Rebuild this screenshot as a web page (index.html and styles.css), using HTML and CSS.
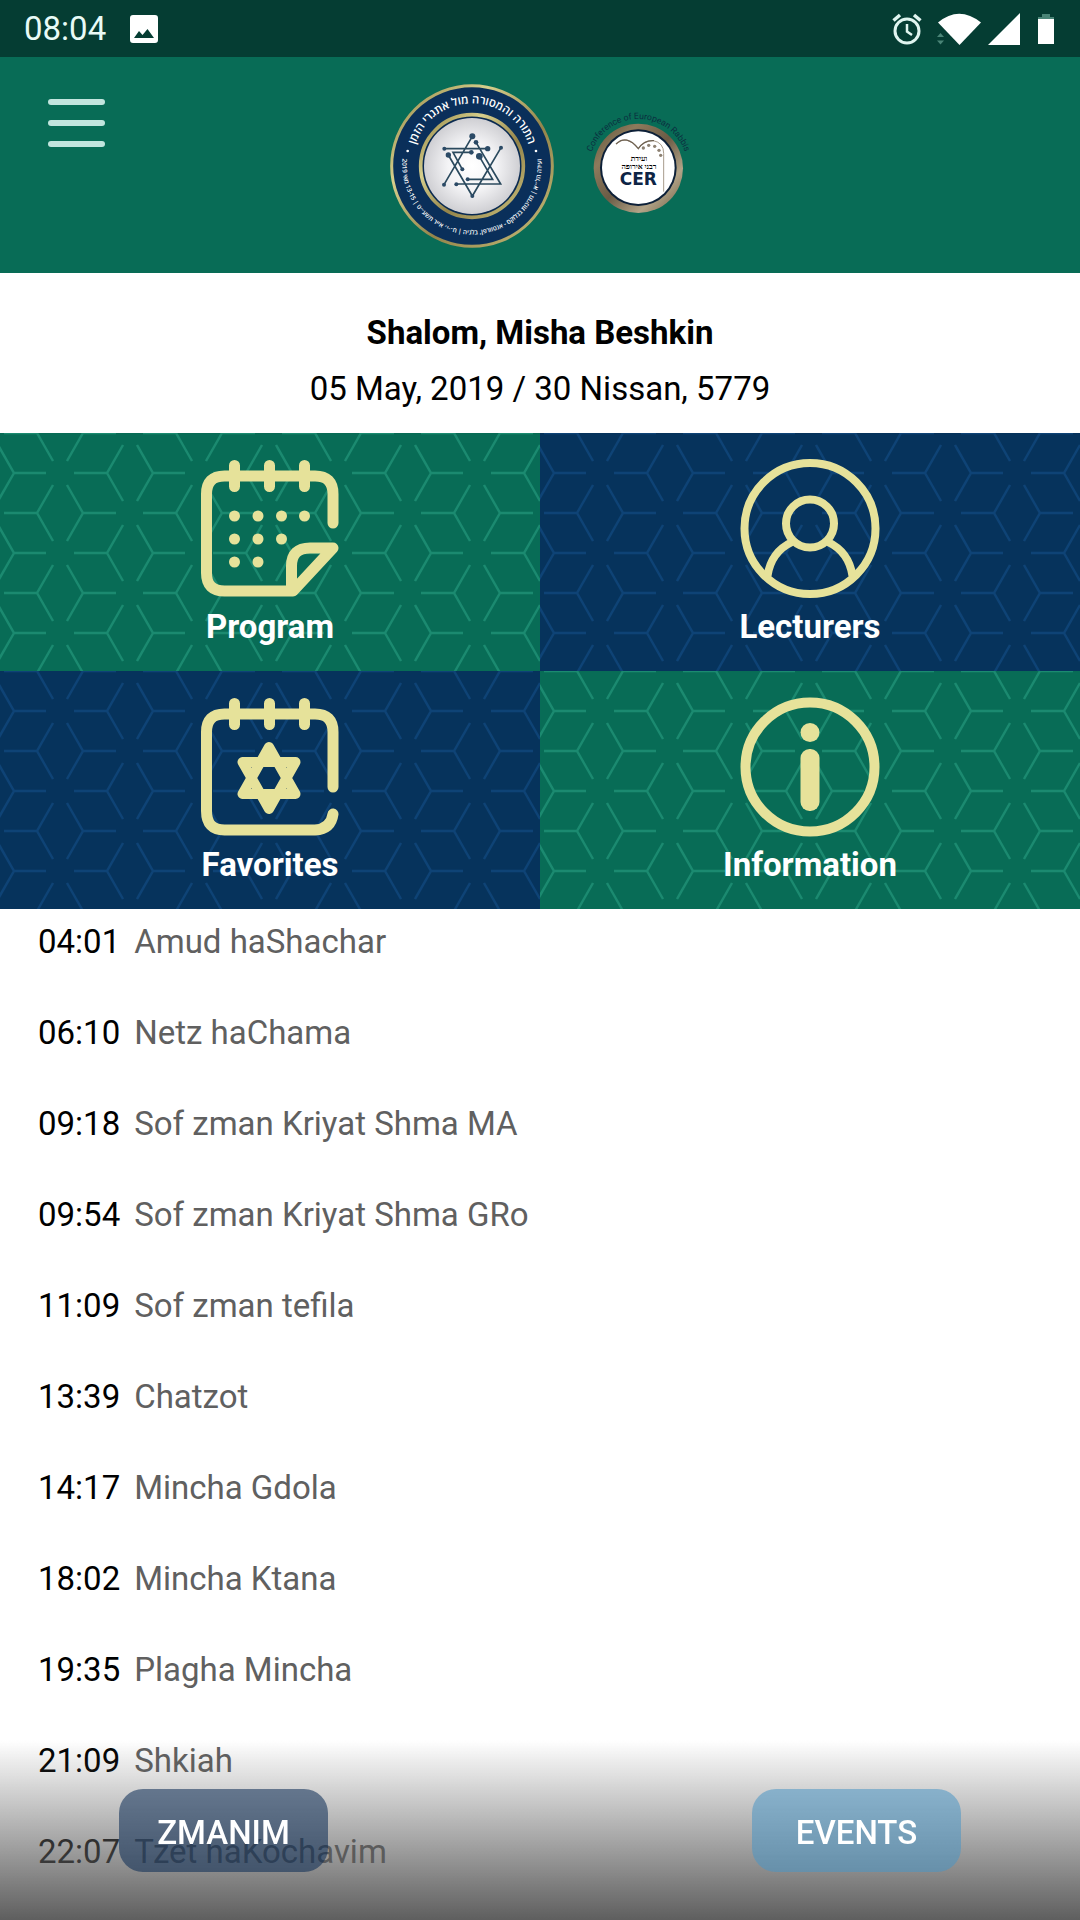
FILE: index.html
```html
<!DOCTYPE html>
<html lang="en">
<head>
    <meta charset="UTF-8">
    <meta name="viewport" content="width=device-width, initial-scale=1.0">
    <title>Conference of European Rabbis</title>
    <link rel="stylesheet" href="styles.css">
</head>
<body>
    <div class="status-bar">
        <span class="clock">08:04</span>
        <svg width="28" height="28" viewBox="0 0 28 28">
            <path fill="#fff" fill-rule="evenodd" d="M3 0H25Q28 0 28 3V25Q28 28 25 28H3Q0 28 0 25V3Q0 0 3 0ZM4 23H24L17.500 14L12.500 20L9 16Z"/>
        </svg>
        <div class="status-icons">
            <svg width="30" height="32" viewBox="0 0 30 32" fill="none" stroke="#e0f5f0">
                <circle cx="15" cy="18" r="12" stroke-width="3"/>
                <path d="M15 11V18.500L20 22" stroke-width="2.500"/>
                <path d="M1.500 7.500L8 2M28.500 7.500L22 2" stroke-width="3.500"/>
            </svg>
            <svg class="wifi" width="44" height="32" viewBox="0 0 44 32">
                <path fill="#fff" d="M1 9.500Q22 -8 44 9.500L22.500 32Z"/>
                <path fill="#4a8577" d="M0 24L3.500 20L7 24ZM0 27.500H7L3.500 31.500Z"/>
            </svg>
            <svg width="32" height="32" viewBox="0 0 32 32"><path fill="#fff" d="M0 32L32 0V32Z"/></svg>
            <svg class="battery" width="16" height="32" viewBox="0 0 16 32">
                <path fill="#4a8577" d="M4 1H12V4H16V7H0V4H4Z"/>
                <path fill="#fff" d="M0 6H16V31H0Z"/>
            </svg>
        </div>
    </div>

    <header class="header">
        <button class="menu" type="button" aria-label="Menu">
            <span></span>
            <span></span>
            <span></span>
        </button>
        <div class="logos">
            <svg width="164" height="164" viewBox="33 41 492 492">
                <defs>
                    <radialGradient id="disc">
                        <stop offset="0" stop-color="#ffffff"/>
                        <stop offset=".5" stop-color="#f4f4f6"/>
                        <stop offset="1" stop-color="#cfcfd3"/>
                    </radialGradient>
                    <linearGradient id="gold" x1="0" y1="0" x2="1" y2="1">
                        <stop offset="0" stop-color="#8f8040"/>
                        <stop offset=".3" stop-color="#d6cf8c"/>
                        <stop offset=".6" stop-color="#94844a"/>
                        <stop offset="1" stop-color="#c9bf7c"/>
                    </linearGradient>
                    <path id="arcTop" d="M101 277A178 178 0 0 1 457 277"/>
                    <path id="arcBottom" d="M71 263A209 209 0 1 0 487 263"/>
                </defs>
                <circle cx="279" cy="287" r="241" fill="#0a2f5a" stroke="url(#gold)" stroke-width="9"/>
                <circle cx="279" cy="287" r="154" fill="#0a2a50" stroke="url(#gold)" stroke-width="11"/>
                <circle cx="279" cy="287" r="144" fill="url(#disc)"/>
                <text class="seal-title"><textPath href="#arcTop" startOffset="50%">התורה והמסורה מול אתגרי הזמן</textPath></text>
                <text class="seal-note"><textPath href="#arcBottom" startOffset="50%">ועידה הל״א | מדינות בנלוקס - אנטוורפן, בלגיה | ח׳-י׳ אייר תשע״ט | 13-15 מאי 2019</textPath></text>
                <g fill="#fff"><circle cx="86" cy="242" r="4"/><circle cx="471" cy="242" r="4"/></g>
                <g fill="none" stroke="#2b4a5e" stroke-width="5">
                    <path d="M280 198L195 343M291 216L365 341H232M196 235H326M366 232L280 377L208 254M277 246H222L250 297M301 258L341 327H266"/>
                </g>
                <g fill="#2b4a66">
                    <circle cx="280" cy="198" r="9"/>
                    <circle cx="291" cy="216" r="7"/>
                    <circle cx="326" cy="235" r="8"/>
                    <circle cx="366" cy="232" r="6"/>
                    <circle cx="196" cy="235" r="6"/>
                    <circle cx="208" cy="254" r="8"/>
                    <circle cx="277" cy="246" r="7"/>
                    <circle cx="301" cy="258" r="10"/>
                    <circle cx="250" cy="297" r="6"/>
                    <circle cx="266" cy="327" r="6"/>
                    <circle cx="232" cy="342" r="6"/>
                    <circle cx="195" cy="343" r="6"/>
                    <circle cx="280" cy="377" r="6"/>
                </g>
            </svg>
            <svg class="cer-logo" width="108" height="112" viewBox="36 60 324 336">
                <defs>
                    <linearGradient id="bronze" x1="0" y1="0" x2="1" y2="1">
                        <stop offset="0" stop-color="#5e5238"/>
                        <stop offset=".25" stop-color="#8d7a5c"/>
                        <stop offset=".5" stop-color="#6b5b45"/>
                        <stop offset=".75" stop-color="#b3a488"/>
                        <stop offset="1" stop-color="#6b5b40"/>
                    </linearGradient>
                    <path id="arcName" d="M57 235A148 148 0 0 1 353 235"/>
                </defs>
                <circle cx="205" cy="235" r="134" fill="url(#bronze)"/>
                <circle cx="205" cy="233" r="115" fill="#0d2038"/>
                <circle cx="205" cy="233" r="109" fill="#fff"/>
                <text class="cer-name"><textPath href="#arcName" startOffset="50%">Conference of European Rabbis</textPath></text>
                <path d="M138 162Q170 132 205 176Q222 150 250 152Q281 158 281 190V305" fill="none" stroke="#a89c8c" stroke-width="3"/>
                <path d="M138 162Q170 132 205 176Q222 150 252 152" fill="none" stroke="#6f6252" stroke-width="4"/>
                <g fill="#8d8172">
                    <circle cx="220" cy="174" r="5"/>
                    <circle cx="236" cy="166" r="5"/>
                    <circle cx="254" cy="169" r="5"/>
                    <circle cx="267" cy="181" r="5"/>
                    <circle cx="272" cy="196" r="5"/>
                </g>
                <text class="cer-hebrew" x="207" y="214">ועידת</text>
                <text class="cer-hebrew" x="207" y="238">רבני אירופה</text>
                <text class="cer" x="205" y="286">CER</text>
            </svg>
        </div>
    </header>

    <section class="greeting">
        <h1>Shalom, Misha Beshkin</h1>
        <p>05 May, 2019 / 30 Nissan, 5779</p>
    </section>

    <nav class="tiles">
        <a class="tile green" href="#program">
            <svg width="140" height="140" viewBox="0 0 140 140" fill="none" stroke="#e6e29a" stroke-width="11" stroke-linecap="round" stroke-linejoin="round">
                <path d="M133 64V35Q133 17 115 17H24.500Q6.500 17 6.500 35V114Q6.500 132 24.500 132H93L133 89H110Q91.500 89 91.500 107V130"/>
                <path d="M34.500 6.500V27.500M69.500 6.500V27.500M104.500 6.500V27.500"/>
                <path d="M34.500 57h0M58 57h0M81.500 57h0M104.500 57h0M34.500 80h0M58 80h0M81.500 80h0M34.500 103h0M58 103h0"/>
            </svg>
            <span>Program</span>
        </a>
        <a class="tile navy" href="#lecturers">
            <svg width="140" height="140" viewBox="0 0 140 140" fill="none" stroke="#e6e29a" stroke-width="8">
                <circle cx="70" cy="69.500" r="65.500"/>
                <circle cx="70" cy="64.500" r="24"/>
                <path d="M27.500 117Q31 93 52 83M112.500 117Q109 93 88 83"/>
            </svg>
            <span>Lecturers</span>
        </a>
        <a class="tile navy" href="#favorites">
            <svg width="140" height="140" viewBox="0 0 140 140" fill="none" stroke="#e6e29a" stroke-width="11" stroke-linecap="round" stroke-linejoin="round">
                <path d="M133 90V35Q133 17 115 17H24.500Q6.500 17 6.500 35V114Q6.500 133 24.500 133H115Q131 132 133 117"/>
                <path d="M34.500 6.500V27.500M69.500 6.500V27.500M104.500 6.500V27.500"/>
                <path stroke-width="10" d="M69 50L42.500 97H95.500ZM69 112L42.500 65H95.500Z"/>
            </svg>
            <span>Favorites</span>
        </a>
        <a class="tile green" href="#information">
            <svg width="140" height="140" viewBox="0 0 140 140" fill="#e6e29a">
                <circle cx="70" cy="70" r="64.500" fill="none" stroke="#e6e29a" stroke-width="10"/>
                <circle cx="70" cy="35.500" r="9.500"/>
                <rect x="60.500" y="52" width="19" height="62" rx="9"/>
            </svg>
            <span>Information</span>
        </a>
    </nav>

    <ul class="zmanim">
        <li><time>04:01</time><span>Amud haShachar</span></li>
        <li><time>06:10</time><span>Netz haChama</span></li>
        <li><time>09:18</time><span>Sof zman Kriyat Shma MA</span></li>
        <li><time>09:54</time><span>Sof zman Kriyat Shma GRo</span></li>
        <li><time>11:09</time><span>Sof zman tefila</span></li>
        <li><time>13:39</time><span>Chatzot</span></li>
        <li><time>14:17</time><span>Mincha Gdola</span></li>
        <li><time>18:02</time><span>Mincha Ktana</span></li>
        <li><time>19:35</time><span>Plagha Mincha</span></li>
        <li><time>21:09</time><span>Shkiah</span></li>
        <li><time>22:07</time><span>Tzet haKochavim</span></li>
    </ul>

    <div class="bottom-bar">
        <button class="tab tab-zmanim" type="button">ZMANIM</button>
        <button class="tab tab-events" type="button">EVENTS</button>
    </div>
</body>
</html>
```
FILE: styles.css
```css
* {
    box-sizing: border-box;
}
body {
    margin: 0;
    background: #fff;
    color: #000;
    font-family: Roboto, "Liberation Sans", sans-serif;
    font-size: 33px;
}
svg {
    display: block;
}

/* status bar */
.status-bar {
    display: flex;
    align-items: center;
    height: 57px;
    padding: 0 26px 0 24px;
    background: #053d33;
    color: #e8fbf7;
}
.clock {
    margin-right: 24px;
}
.status-icons {
    display: flex;
    align-items: center;
    margin-left: auto;
}
.wifi {
    margin: 0 7px 0 15px;
}
.battery {
    margin-left: 18px;
}

/* header */
.header {
    display: grid;
    grid-template-columns: 1fr auto 1fr;
    align-items: start;
    padding: 27px 48px 25px;
    background: #086c56;
}
.menu {
    display: flex;
    flex-direction: column;
    justify-self: start;
    gap: 15px;
    margin-top: 15px;
    padding: 0;
    border: 0;
    background: none;
    cursor: pointer;
}
.menu span {
    width: 57px;
    height: 6px;
    border-radius: 3px;
    background: #c2e5de;
}
.logos {
    display: flex;
    align-items: center;
    gap: 28px;
}
.cer-logo {
    overflow: visible;
}
.seal-title,
.seal-note {
    fill: #fff;
    font-family: "Open Sans", "DejaVu Sans", sans-serif;
    text-anchor: middle;
}
.seal-title {
    font-size: 34px;
    font-weight: 600;
}
.seal-note {
    font-size: 19px;
    font-weight: 600;
}
.cer-name {
    fill: #0b2f40;
    font-size: 26px;
    text-anchor: middle;
}
.cer-hebrew {
    font-family: "Liberation Serif", "DejaVu Serif", serif;
    font-size: 23px;
    font-weight: bold;
    text-anchor: middle;
}
.cer {
    fill: #0d2445;
    font-family: "DejaVu Sans", sans-serif;
    font-size: 51px;
    font-weight: bold;
    text-anchor: middle;
}

/* greeting */
.greeting {
    padding: 32px 16px 16px;
    text-align: center;
}
.greeting h1,
.greeting p {
    margin: 0;
    font-size: 33px;
    line-height: 56px;
}

/* tiles */
.tiles {
    display: grid;
    grid-template-columns: 1fr 1fr;
}
.tile {
    display: flex;
    flex-direction: column;
    align-items: center;
    gap: 8px;
    padding: 26px 0 24px;
    color: #fff;
    font-weight: bold;
    line-height: 40px;
    text-decoration: none;
}
.green {
    background: #086c56 url("data:image/svg+xml,%3Csvg xmlns='http://www.w3.org/2000/svg' width='139' height='80' fill='none' stroke='%231b8a70' stroke-width='2.4'%3E%3Cpath d='M46 40H14L-2 12M14 40L-2 68M153 40L137 12M153 40L137 68M74 40H107L123 12M107 40L123 68M4 0H37L53 28M37 0L53 -28M116 0H83L67 28M4 80H37L53 52M116 80H83L67 52'/%3E%3C/svg%3E");
}
.navy {
    background: #06335c url("data:image/svg+xml,%3Csvg xmlns='http://www.w3.org/2000/svg' width='139' height='80' fill='none' stroke='%230e4376' stroke-width='2.4'%3E%3Cpath d='M46 40H14L-2 12M14 40L-2 68M153 40L137 12M153 40L137 68M74 40H107L123 12M107 40L123 68M4 0H37L53 28M37 0L53 -28M116 0H83L67 28M4 80H37L53 52M116 80H83L67 52'/%3E%3C/svg%3E");
}

/* times */
.zmanim {
    margin: 0;
    padding: 10px 38px 0;
    list-style: none;
}
.zmanim li {
    display: flex;
    gap: 14px;
    padding-bottom: 46px;
    line-height: 45px;
}
.zmanim span {
    color: #606060;
}

/* buttons over the list */
.bottom-bar {
    position: fixed;
    right: 0;
    bottom: 0;
    left: 0;
    display: flex;
    justify-content: space-between;
    padding: 49px 119px 48px;
    background: linear-gradient(rgba(88, 88, 88, 0), rgba(88, 88, 88, .96));
}
.tab {
    min-width: 209px;
    height: 83px;
    padding: 4px 0 0;
    border: 0;
    border-radius: 24px;
    color: #fff;
    font: 500 33px Roboto, "Liberation Sans", sans-serif;
    cursor: pointer;
}
.tab-zmanim {
    background: rgba(9, 42, 84, .55);
}
.tab-events {
    background: rgba(75, 149, 196, .55);
}
```
